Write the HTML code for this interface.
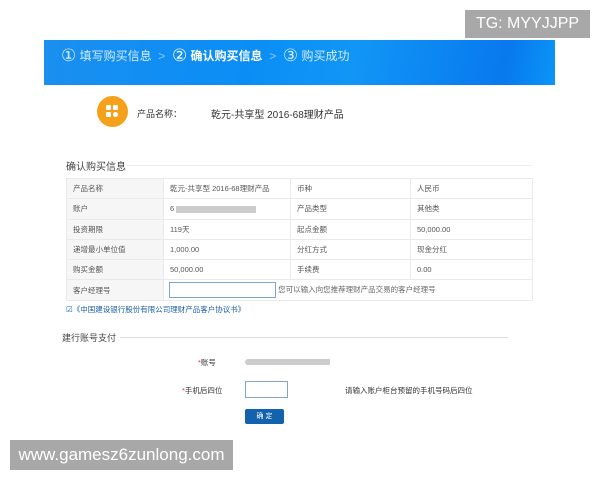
<!DOCTYPE html>
<html><head><meta charset="utf-8"><style>
*{margin:0;padding:0;box-sizing:border-box}
body{width:600px;height:480px;background:#fff;position:relative;overflow:hidden;font-family:"Liberation Sans","Noto Sans CJK SC",sans-serif;color:#333}
.a{position:absolute}
.ban{left:44px;top:40px;width:511px;height:45px;background:linear-gradient(100deg,#1a8ff0,#0a8ef5 40%,#1196f6 60%,#0879ee 90%,#0a95f7);}
.step{top:46px;font-size:12px;color:#d6ecff;white-space:nowrap;line-height:20px}
.step b{color:#fff}
.c{font-size:17px;vertical-align:-1px;font-family:"DejaVu Sans",sans-serif;font-weight:normal}
table{position:absolute;left:66px;top:178px;border-collapse:collapse;font-size:7.5px;color:#555}
td{border:1px solid #eaeaea;height:20.3px;padding-left:6px}
td.l{background:#f6f6f6}
</style></head><body>
<div class="a" style="left:465px;top:10px;width:125px;height:28px;background:#a8a8a8;color:#fff;font-size:16px;line-height:28px;text-align:center">TG: MYYJJPP</div>
<div class="a ban"></div>
<div class="a step" style="left:61px"><span class="c">①</span> 填写购买信息 &nbsp;<span style="opacity:.6">&gt;</span>&nbsp; <b><span class="c">②</span> 确认购买信息</b> &nbsp;<span style="opacity:.6">&gt;</span>&nbsp; <span class="c">③</span> 购买成功</div>
<div class="a" style="left:97px;top:96px;width:31px;height:31px;border-radius:50%;background:#f5a11c"></div>
<div class="a" style="left:106px;top:105px;width:5px;height:5px;background:#fff;border-radius:1px"></div>
<div class="a" style="left:113px;top:105px;width:5px;height:5px;background:#fff;border-radius:1px"></div>
<div class="a" style="left:106px;top:112px;width:5px;height:5px;background:#fff;border-radius:1px"></div>
<div class="a" style="left:113px;top:112px;width:5px;height:5px;background:#fff;border-radius:50%"></div>
<div class="a" style="left:137px;top:107px;font-size:9px">产品名称：</div>
<div class="a" style="left:211px;top:106px;font-size:10px">乾元-共享型 2016-68理财产品</div>
<div class="a" style="left:66px;top:158px;font-size:10px;color:#444">确认购买信息</div>
<div class="a" style="left:127px;top:165px;width:405px;height:1px;background:#eee"></div>
<table>
<tr><td class="l" style="width:97px">产品名称</td><td style="width:127px">乾元-共享型 2016-68理财产品</td><td style="width:120px">币种</td><td style="width:122px">人民币</td></tr>
<tr><td class="l">账户</td><td>6<span style="display:inline-block;width:80px;height:7px;background:#ccc;margin-left:2px;vertical-align:middle"></span></td><td>产品类型</td><td>其他类</td></tr>
<tr><td class="l">投资期限</td><td>119天</td><td>起点金额</td><td>50,000.00</td></tr>
<tr><td class="l">递增最小单位值</td><td>1,000.00</td><td>分红方式</td><td>现金分红</td></tr>
<tr><td class="l">购买金额</td><td>50,000.00</td><td>手续费</td><td>0.00</td></tr>
<tr><td class="l">客户经理号</td><td colspan="3" style="padding-left:5px"><span style="display:inline-block;width:107px;height:16px;border:1px solid #7fa6c9;vertical-align:middle"></span> <span style="color:#666">您可以输入向您推荐理财产品交易的客户经理号</span></td></tr>
</table>
<div class="a" style="left:66px;top:304px;font-size:7.5px;color:#1a5fa8">☑《中国建设银行股份有限公司理财产品客户协议书》</div>
<div class="a" style="left:62px;top:331px;font-size:9px;color:#444">建行账号支付</div>
<div class="a" style="left:120px;top:337px;width:388px;height:1px;background:#ddd"></div>
<div class="a" style="left:198px;top:357px;font-size:7.5px"><span style="color:#d33">*</span>账号</div>
<div class="a" style="left:245px;top:359px;width:85px;height:6px;background:#ccc;border-radius:3px 0 0 3px"></div>
<div class="a" style="left:182px;top:385px;font-size:7.5px"><span style="color:#d33">*</span>手机后四位</div>
<div class="a" style="left:245px;top:381px;width:43px;height:17px;border:1px solid #7fa6c9"></div>
<div class="a" style="left:345px;top:385px;font-size:7.5px">请输入账户柜台预留的手机号码后四位</div>
<div class="a" style="left:245px;top:409px;width:39px;height:15px;background:#1262ad;border-radius:2px;color:#fff;font-size:7px;text-align:center;line-height:15px">确 定</div>
<div class="a" style="left:10px;top:440px;width:223px;height:30px;background:#a8a8a8;color:#fff;font-size:17px;line-height:30px;text-align:center">www.gamesz6zunlong.com</div>
</body></html>
